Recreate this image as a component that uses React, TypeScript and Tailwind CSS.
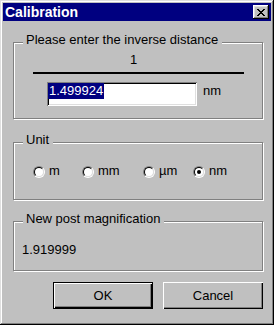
import React from "react";

function Group({ title, className, children }: { title: string; className: string; children?: React.ReactNode }) {
  return (
    <div className={className}>
      <span className="absolute left-[9px] top-[-11px] pl-[3px] pr-[4px] bg-[#c0c0c0] leading-[15px] whitespace-nowrap">{title}</span>
      {children}
    </div>
  );
}

function Radio({ label, checked, w }: { label: string; checked?: boolean; w: string }) {
  return (
    <div className={w}>
      <div className="flex items-start">
        <div className="mt-[3px] w-[12px] h-[12px] shrink-0 rounded-full border border-t-[#808080] border-l-[#808080] border-b-white border-r-white">
          <div className="w-[10px] h-[10px] rounded-full border border-t-black border-l-black border-b-[#dfdfdf] border-r-[#dfdfdf] bg-white flex items-center justify-center">
            {checked ? <div className="w-[4px] h-[4px] rounded-full bg-black" /> : null}
          </div>
        </div>
        <span className="ml-[4px] leading-[15px]">{label}</span>
      </div>
    </div>
  );
}

export default function App() {
  return (
    <div className="w-[274px] h-[325px] bg-[#c0c0c0] p-[3px] flex flex-col font-['Liberation_Sans',Arial,sans-serif] text-[13px] leading-[15px] text-black shadow-[inset_-1px_-1px_0_#000,inset_1px_1px_0_#dfdfdf,inset_-2px_-2px_0_#808080,inset_2px_2px_0_#fff]">
      <div className="h-[18px] shrink-0 bg-[#000080] flex items-center justify-between pl-[2px] pr-[2px]">
        <span className="text-white font-bold text-[14px] leading-[16px]">Calibration</span>
        <button className="w-[16px] h-[14px] bg-[#c0c0c0] flex items-center justify-center shadow-[inset_-1px_-1px_0_#000,inset_1px_1px_0_#fff,inset_-2px_-2px_0_#808080,inset_2px_2px_0_#dfdfdf]">
          <svg width="8" height="7" viewBox="0 0 8 7" shapeRendering="crispEdges">
            <rect x="0" y="0" width="2" height="1" fill="#000" />
            <rect x="6" y="0" width="2" height="1" fill="#000" />
            <rect x="1" y="1" width="2" height="1" fill="#000" />
            <rect x="5" y="1" width="2" height="1" fill="#000" />
            <rect x="2" y="2" width="4" height="1" fill="#000" />
            <rect x="3" y="3" width="2" height="1" fill="#000" />
            <rect x="2" y="4" width="4" height="1" fill="#000" />
            <rect x="1" y="5" width="2" height="1" fill="#000" />
            <rect x="5" y="5" width="2" height="1" fill="#000" />
            <rect x="0" y="6" width="2" height="1" fill="#000" />
            <rect x="6" y="6" width="2" height="1" fill="#000" />
          </svg>
        </button>
      </div>
      <div className="pl-[10px] flex flex-col">
        <Group
          title="Please enter the inverse distance"
          className="relative mt-[21px] w-[250px] h-[77px] border border-[#808080] shadow-[1px_1px_0_#fff,inset_1px_1px_0_#fff]"
        >
          <div className="mt-[9px] ml-[19px] w-[211px] pr-[10px] text-center">1</div>
          <div className="mt-[5px] ml-[19px] w-[211px] h-[2px] bg-black" />
          <div className="mt-[8px] ml-[33px] flex items-start">
            <div className="w-[150px] h-[24px] bg-white pl-[1px] pt-[1px] shadow-[inset_1px_1px_0_#808080,inset_-1px_-1px_0_#fff,inset_2px_2px_0_#000,inset_-2px_-2px_0_#dfdfdf]">
              <span className="inline-block bg-[#000080] text-white leading-[16px] pl-[1px] pr-[1px]">1.499924</span>
            </div>
            <span className="ml-[6px] mt-[1px]">nm</span>
          </div>
        </Group>
        <Group
          title="Unit"
          className="relative mt-[23px] w-[250px] h-[58px] border border-[#808080] shadow-[1px_1px_0_#fff,inset_1px_1px_0_#fff]"
        >
          <div className="mt-[20px] ml-[19px] grid grid-cols-[49px_61px_50px_auto]">
            <Radio label="m" w="w-[49px]" />
            <Radio label="mm" w="w-[61px]" />
            <Radio label="µm" w="w-[50px]" />
            <Radio label="nm" checked w="w-auto" />
          </div>
        </Group>
        <Group
          title="New post magnification"
          className="relative mt-[21px] w-[250px] h-[50px] border border-[#808080] shadow-[1px_1px_0_#fff,inset_1px_1px_0_#fff]"
        >
          <div className="mt-[20px] ml-[8px]">1.919999</div>
        </Group>
        <div className="mt-[11px] w-[250px] flex justify-end gap-[10px]">
          <button className="w-[100px] h-[27px] border border-black bg-[#c0c0c0] leading-[15px] shadow-[inset_1px_1px_0_#fff,inset_-1px_-1px_0_#000,inset_-2px_-2px_0_#808080]">
            OK
          </button>
          <button className="w-[100px] h-[27px] bg-[#c0c0c0] leading-[15px] shadow-[inset_1px_1px_0_#fff,inset_-1px_-1px_0_#000,inset_-2px_-2px_0_#808080]">
            Cancel
          </button>
        </div>
      </div>
    </div>
  );
}
